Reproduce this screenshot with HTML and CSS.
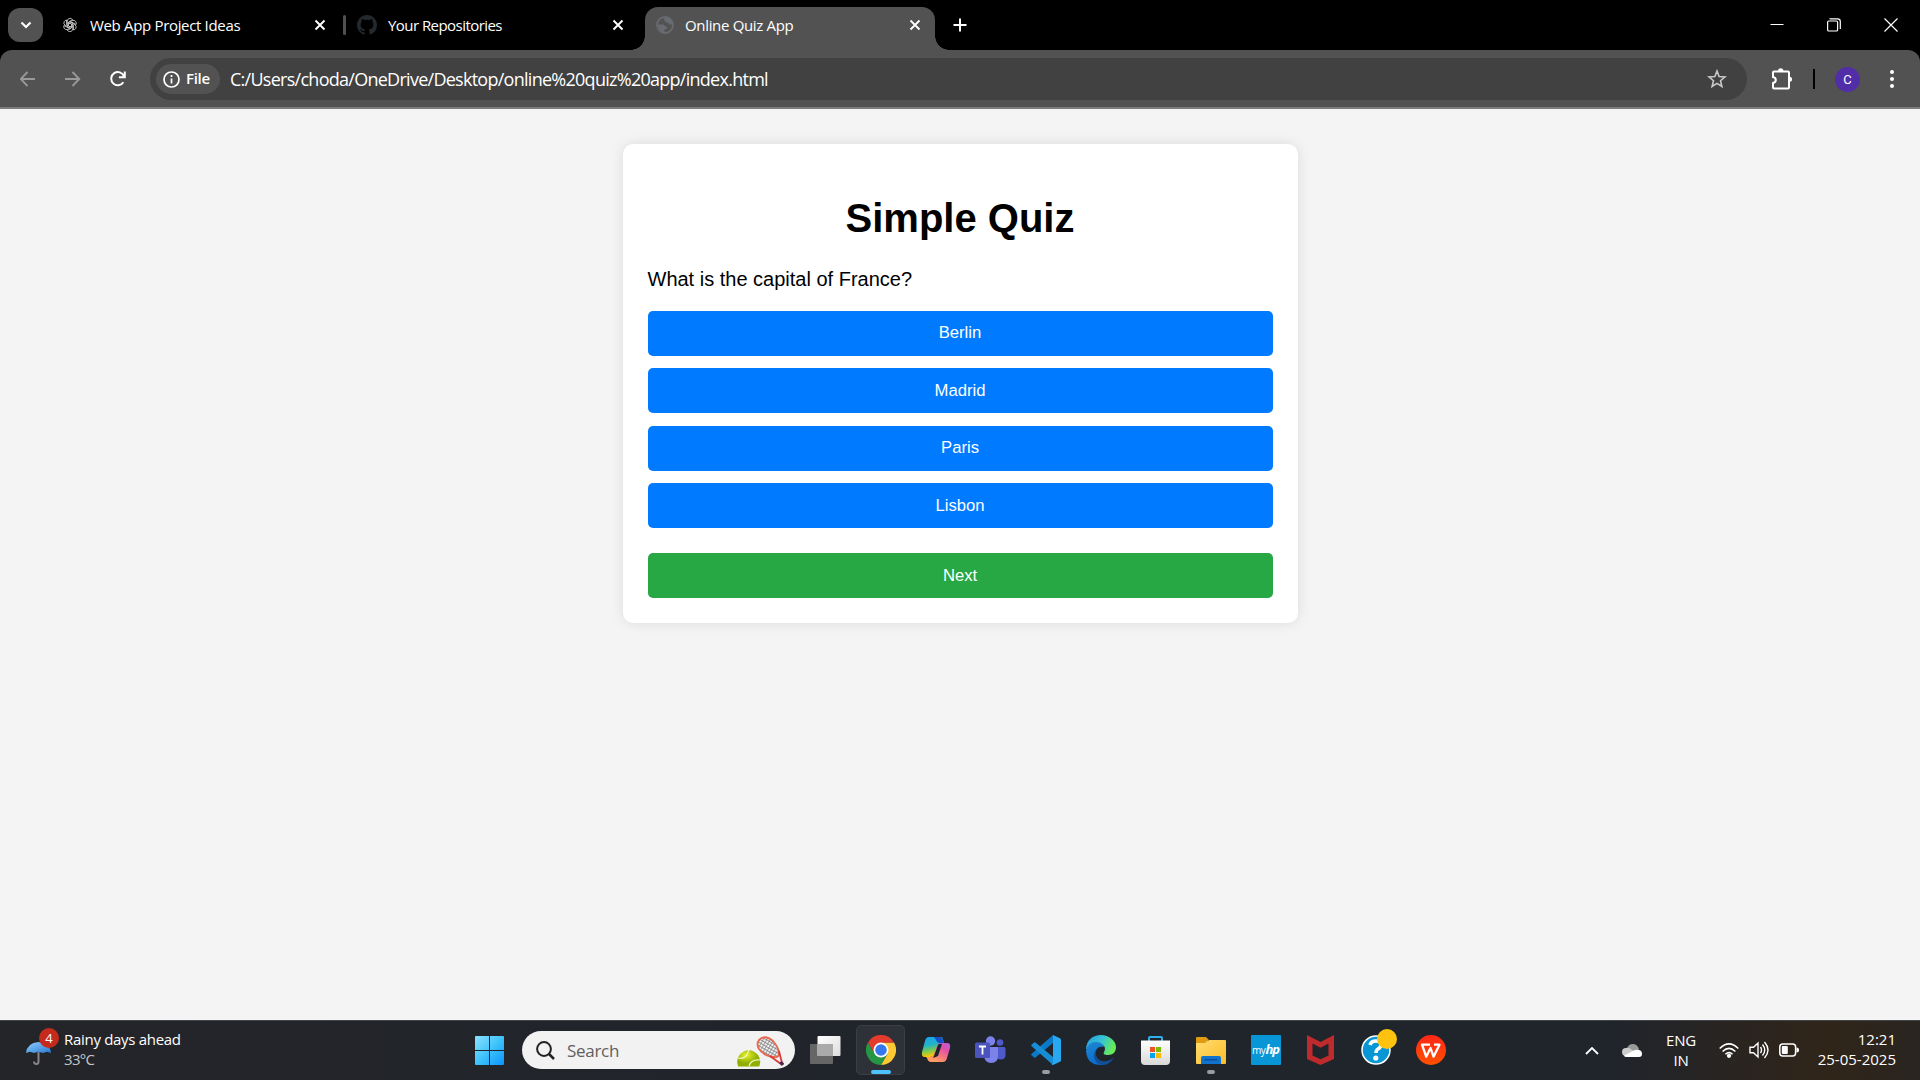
FILE: index.html
```html
<!DOCTYPE html>
<html lang="en">
<head>
<meta charset="utf-8">
<title>Online Quiz App</title>
<link rel="stylesheet" href="styles.css">
</head>
<body>
<header class="tabstrip">
  <div class="tab-search"><svg width="12" height="8" viewBox="0 0 12 8"><path d="M1.500 1.500 6 6l4.500-4.500" fill="none" stroke="#fff" stroke-width="2.200"/></svg></div>
  <div class="tab tab-one">
    <svg class="favicon" width="16" height="16" viewBox="0 0 16 16" fill="none" stroke="#d0d0d0" stroke-width=".8"><path id="petal" d="M5.300 9.500V4.100Q5.400 1.500 8 1.300q1.600 0 2.600 1.200L6.500 5v4"/><use href="#petal" transform="rotate(60 8 8)"/><use href="#petal" transform="rotate(120 8 8)"/><use href="#petal" transform="rotate(180 8 8)"/><use href="#petal" transform="rotate(240 8 8)"/><use href="#petal" transform="rotate(300 8 8)"/></svg>
    <span class="tab-title">Web App Project Ideas</span>
    <svg class="tab-close" width="12" height="12" viewBox="0 0 12 12"><path d="m1.500 1.500 9 9m0-9-9 9" stroke="#fff" stroke-width="1.900"/></svg>
  </div>
  <div class="tab-divider"></div>
  <div class="tab tab-two">
    <svg class="favicon" width="20" height="20" viewBox="0 0 16 16" fill="#24292e"><path d="M8 0C3.580 0 0 3.580 0 8c0 3.540 2.290 6.530 5.470 7.590.4.070.55-.17.55-.38 0-.19-.01-.82-.01-1.490-2.010.37-2.530-.49-2.690-.94-.09-.23-.48-.94-.82-1.130-.28-.15-.68-.52-.01-.53.63-.01 1.080.58 1.230.82.72 1.210 1.870.87 2.330.66.07-.52.28-.87.51-1.070-1.780-.2-3.640-.89-3.640-3.950 0-.87.31-1.590.82-2.150-.08-.2-.36-1.020.08-2.120 0 0 .67-.21 2.200.82.64-.18 1.320-.27 2-.27s1.360.09 2 .27c1.530-1.040 2.200-.82 2.200-.82.44 1.100.16 1.920.08 2.120.51.56.82 1.270.82 2.150 0 3.070-1.870 3.750-3.650 3.950.29.25.54.73.54 1.480 0 1.070-.01 1.930-.01 2.200 0 .21.15.46.55.38A8.010 8.010 0 0 0 16 8c0-4.420-3.580-8-8-8"/></svg>
    <span class="tab-title">Your Repositories</span>
    <svg class="tab-close" width="12" height="12" viewBox="0 0 12 12"><path d="m1.500 1.500 9 9m0-9-9 9" stroke="#fff" stroke-width="1.900"/></svg>
  </div>
  <div class="tab tab-active">
    <svg class="favicon" width="18" height="18" viewBox="0 0 18 18"><circle cx="9" cy="9" r="8" fill="none" stroke="#686b71" stroke-width="1.800"/><path d="M1.500 8.500h5.500c1.500 0 1.500 2 3 2s1.500 1.500.5 2.500H8.500v3.500l-4-1zM9 1.200l-1 2.300c0 2 2 1 2 2.500 0 1 2.500 0 2.500 1.500 0 1 3 1 4.500 1C17 4 13 1 9 1.200" fill="#686b71"/></svg>
    <span class="tab-title">Online Quiz App</span>
    <svg class="tab-close" width="12" height="12" viewBox="0 0 12 12"><path d="m1.500 1.500 9 9m0-9-9 9" stroke="#fff" stroke-width="1.900"/></svg>
  </div>
  <svg class="new-tab" width="14" height="14" viewBox="0 0 14 14"><path d="M7 .5v13M.5 7h13" stroke="#fff" stroke-width="2"/></svg>
  <div class="window-controls">
    <svg width="14" height="14" viewBox="0 0 14 14"><path d="M.5 6.500h13" stroke="#fff" stroke-width="1"/></svg>
    <svg width="14" height="14" viewBox="0 0 14 14" fill="none" stroke="#fff"><rect x=".6" y="3" width="10" height="10" rx="1.300" stroke-width="1.200"/><path d="M3 1.200V.8h7.500Q13.300.8 13.300 3.500V11" stroke-width="1.200"/></svg>
    <svg width="14" height="14" viewBox="0 0 14 14"><path d="m.5.5 13 13m0-13-13 13" stroke="#fff" stroke-width="1.200"/></svg>
  </div>
</header>
<nav class="toolbar-wrap">
  <div class="toolbar">
    <svg class="nav-icon" width="16" height="16" viewBox="0 0 16 16"><path d="M15 8H1M7.500 1 .7 8l6.800 7" fill="none" stroke="#999" stroke-width="1.800"/></svg>
    <svg class="nav-icon" width="16" height="16" viewBox="0 0 16 16"><path d="M0 8h14M7.500 1l6.800 7-6.800 7" fill="none" stroke="#999" stroke-width="1.800"/></svg>
    <svg class="nav-icon" width="16" height="16" viewBox="0 0 16 16"><path d="M13.400 11.200A6.600 6.600 0 1 1 14 5.300M14.800.4v5.900H8.900" fill="none" stroke="#fff" stroke-width="2"/></svg>
    <div class="omnibox">
      <div class="chip">
        <svg width="17" height="17" viewBox="0 0 17 17"><circle cx="8.500" cy="8.500" r="7.500" fill="none" stroke="#fff" stroke-width="1.700"/><path d="M8.500 7.400v5M8.500 4v1.900" stroke="#fff" stroke-width="1.700"/></svg>
        <span>File</span>
      </div>
      <span class="url">C:/Users/choda/OneDrive/Desktop/online%20quiz%20app/index.html</span>
      <svg class="star" width="20" height="20" viewBox="0 0 20 20"><path d="m10 2 2.100 5.500 5.900.4-4.500 3.800 1.400 5.800-4.900-3.100-4.900 3.100 1.400-5.800L2 7.900l5.900-.4z" fill="none" stroke="#c8c8c8" stroke-width="1.600"/></svg>
    </div>
    <svg class="extensions" width="22" height="22" viewBox="0 0 22 22"><path d="M2 4.500Q2 3.500 3 3.500h14q1 0 1 1v14.900q0 1-1 1H3q-1 0-1-1v-4.300q2.800-.4 2.800-3T2 9.100z" fill="none" stroke="#fff" stroke-width="2"/><path d="M7 3.500V3a2.700 2.700 0 0 1 5.400 0v.5zM18 8.800h.6a2.500 2.500 0 0 1 0 5H18z" fill="#fff"/></svg>
    <div class="toolbar-divider"></div>
    <div class="avatar">C</div>
    <svg class="menu" width="4" height="18" viewBox="0 0 4 18" fill="#fff"><circle cx="2" cy="2" r="2"/><circle cx="2" cy="9" r="2"/><circle cx="2" cy="16" r="2"/></svg>
  </div>
</nav>
<main class="page">
  <section class="quiz">
    <h1 class="quiz-title">Simple Quiz</h1>
    <p class="question">What is the capital of France?</p>
    <div class="answers">
      <button class="btn">Berlin</button>
      <button class="btn">Madrid</button>
      <button class="btn">Paris</button>
      <button class="btn">Lisbon</button>
    </div>
    <button class="btn btn-next">Next</button>
  </section>
</main>
<footer class="taskbar">
  <div class="weather">
    <div class="weather-icon">
      <svg width="26" height="25" viewBox="0 0 26 25"><defs><linearGradient id="umb" x2="1" y2="1"><stop stop-color="#8fd0ff"/><stop offset="1" stop-color="#2878d4"/></linearGradient></defs><path d="M12.500 12v9.500q0 2.500-2.200 2.500T8 21.500" fill="none" stroke="#8a8584" stroke-width="2"/><path d="M0 13Q1 3 12.500 2 24 3 25 13l-4-1.200L17 13l-4.500-1.200L8 13l-4-1.200z" fill="url(#umb)"/></svg>
      <span class="badge">4</span>
    </div>
    <div class="weather-text"><span>Rainy days ahead</span><span class="temp">33°C</span></div>
  </div>
  <div class="dock">
    <svg class="start" width="29" height="29" viewBox="0 0 29 29"><defs><linearGradient id="win" x2="29" y2="29" gradientUnits="userSpaceOnUse"><stop stop-color="#8ce2ff"/><stop offset=".5" stop-color="#3fc3fb"/><stop offset="1" stop-color="#0a93fb"/></linearGradient></defs><path d="M1 0h13v14H0V1q0-1 1-1M15 0h13q1 0 1 1v13H15zM0 15h14v14H1q-1 0-1-1zM15 15h14v13q0 1-1 1H15z" fill="url(#win)"/></svg>
    <div class="search">
      <svg width="19" height="19" viewBox="0 0 19 19"><circle cx="8" cy="8" r="6.900" fill="none" stroke="#222" stroke-width="2"/><path d="m13 13 5 5" stroke="#222" stroke-width="2.500"/></svg>
      <span class="search-label">Search</span>
      <svg class="tennis" width="47" height="31" viewBox="0 0 47 31"><defs><radialGradient id="ball" cx=".4" cy=".3"><stop stop-color="#e6f22c"/><stop offset="1" stop-color="#8fae00"/></radialGradient><pattern id="mesh" width="3" height="3" patternUnits="userSpaceOnUse" patternTransform="rotate(30)"><path d="M0 0h3M0 0v3" stroke="#777" stroke-width="1.300"/></pattern></defs><path d="M1.200 30.500a11.500 11.500 0 1 1 21 0z" fill="url(#ball)"/><path d="M1 22q9 2 11-9M12 30q2-7 11-6" fill="none" stroke="#f4f8c8" stroke-width="1.200"/><path d="M22 4q6-6 14 1 6 7 6 12 0 5-5 4-10-1-15-8-3-5 0-9z" fill="url(#mesh)" stroke="#e8674d" stroke-width="1.800"/><path d="m33 20 11 8M42 15l3 12" stroke="#d53b3b" stroke-width="1.800"/><path d="m43.500 26 2.500 3" stroke="#53284f" stroke-width="3.500"/></svg>
    </div>
    <div class="slot"><svg width="31" height="28" viewBox="0 0 31 28"><defs><linearGradient id="tv" x2="1" y2="1"><stop stop-color="#fff"/><stop offset="1" stop-color="#ddd"/></linearGradient></defs><rect y="8" width="23" height="20" rx="1" fill="#666"/><rect x="7.500" width="23" height="20" rx="1" fill="url(#tv)"/><path d="M7.500 8H23v12H7.500z" fill="#aaa"/></svg></div>
    <div class="slot slot-active"><svg width="30" height="30" viewBox="0 0 48 48"><path d="M24 12h20.800A24 24 0 0 1 24 48l10.400-18z" fill="#fcc934"/><path d="M13.600 30 3.200 12A24 24 0 0 0 24 48l10.400-18z" fill="#249644"/><path d="M24 12h20.800A24 24 0 0 0 3.200 12l10.400 18z" fill="#e33b2e"/><circle cx="24" cy="24" r="12" fill="#fff"/><circle cx="24" cy="24" r="9.300" fill="#3478ee"/></svg><i class="indicator indicator-on"></i></div>
    <div class="slot"><svg width="30" height="28" viewBox="0 0 30 28"><defs><linearGradient id="cpa" x2=".2" y2="1"><stop stop-color="#16a5f4"/><stop offset=".45" stop-color="#24b3c5"/><stop offset=".7" stop-color="#70c95a"/><stop offset="1" stop-color="#ffc800"/></linearGradient><linearGradient id="cpb" x1="1" x2=".5" y2="1"><stop stop-color="#9f63ff"/><stop offset=".5" stop-color="#e351a6"/><stop offset="1" stop-color="#ff9b60"/></linearGradient></defs><path d="M15 1h4q2 0 3 3l1 3h3q4 0 3 5l-3 10q-1 4-4 4H10q-3 0-4-4l-1-1h4q3 0 4-4l3-10q1-3 4-3z" fill="url(#cpb)"/><path d="M8 1h11q3 0 3 3l1 3h-3q-3 0-4 3l-3 8q-1 3-4 3H4q-4 0-3-5L4 5q1-4 4-4" fill="url(#cpa)"/><path d="M13 1h6q2 0 3 3l1 3h-5q-2 0-3-3z" fill="#174fc9"/><path d="m17 9-4 11-1 2q3-1 5-2l4-12q-3-1-4 1" fill="#20232b"/></svg></div>
    <div class="slot"><svg width="31" height="28" viewBox="0 0 31 28"><circle cx="15.500" cy="5" r="4.700" fill="#7b83eb"/><circle cx="25" cy="6.500" r="3.300" fill="#5059c9"/><path d="M22 11h7q1.500 0 1.500 1.500V19q0 4.500-5 4.500Q20 23 20 18z" fill="#5059c9"/><path d="M9 11h13q1 0 1 1v8q0 7-7 7-6 0-7-7z" fill="#7b83eb"/><rect y="6.500" width="15" height="15.500" rx="1.500" fill="#4b53bc"/><path d="M4 10.500h7M7.500 10.500v8" stroke="#fff" stroke-width="1.800"/></svg></div>
    <div class="slot"><svg width="30" height="30" viewBox="0 0 30 30"><path d="M22 0v8L4.500 22.500q-.8.600-1.500 0L.7 20.500q-1-.8 0-1.700z" fill="#0a79c8"/><path d="M22 30v-8L4.500 7.500Q3.800 7 3 7.500L.7 9.500q-1 .8 0 1.700z" fill="#168dd5"/><path d="M22 0l7 3.200q1 .5 1 1.500v20.600q0 1-1 1.500L22 30q-.8 0-1.500-.8L22 28z" fill="#2aa7f1"/></svg><i class="indicator"></i></div>
    <div class="slot"><svg width="30" height="30" viewBox="0 0 30 30"><defs><linearGradient id="eda" x2="1" y2=".35"><stop stop-color="#259ddd"/><stop offset=".55" stop-color="#35c1d5"/><stop offset="1" stop-color="#66eb58"/></linearGradient><linearGradient id="edb" x2=".4" y2="1"><stop stop-color="#2087cf"/><stop offset="1" stop-color="#086dd1"/></linearGradient></defs><path d="M0 15C0 5 7 0 15 0s15 6 15 12c0 5-3 8-8 8-4 0-5-1-4-3 3-5-1-8-6-9Q4 7 0 15" fill="url(#eda)"/><path d="M0 16Q2 7 10 7q6 0 8 5c-7-2-11 5-7 11 3 5 9 5 10 5Q17 30 15 30 1 30 0 16" fill="url(#edb)"/><path d="M13 12c-6 5-3 13 3 14 5 1 9-1 12-4-3 6-7 8-11 8C7 29 5 17 13 12" fill="#124f96"/></svg></div>
    <div class="slot"><svg width="29" height="29" viewBox="0 0 29 29"><defs><linearGradient id="bag" x2="0" y2="1"><stop stop-color="#fff"/><stop offset="1" stop-color="#d8d8d8"/></linearGradient></defs><path d="M8 6V2q0-1 1-1h11q1 0 1 1v4" fill="none" stroke="#2fb0ea" stroke-width="2"/><path d="M0 4.500h29V25q0 4-4 4H4q-4 0-4-4z" fill="url(#bag)"/><path d="M9 11h5v5H9z" fill="#f05125"/><path d="M15 11h5v5h-5z" fill="#7fb900"/><path d="M9 17h5v5H9z" fill="#00a3ee"/><path d="M15 17h5v5h-5z" fill="#ffb900"/></svg></div>
    <div class="slot"><svg width="30" height="27" viewBox="0 0 30 27"><defs><linearGradient id="fold" x2="1" y2="1"><stop stop-color="#ffdc70"/><stop offset="1" stop-color="#fcbc29"/></linearGradient></defs><path d="M1 0h9l3 3h-1v5H0V1q0-1 1-1" fill="#df9c12"/><path d="M0 6h9l4-3h16q1 0 1 1v22q0 1-1 1H1q-1 0-1-1z" fill="url(#fold)"/><path d="M5 27v-6q0-2 2-2h16q2 0 2 2v6z" fill="#1172cf"/><path d="M8.500 22.800h13" stroke="#073d82"/></svg><i class="indicator"></i></div>
    <div class="slot"><div class="myhp">my<b>hp</b></div></div>
    <div class="slot"><svg width="27" height="30" viewBox="0 0 27 30"><path d="m0 0 13.500 7L27 0v24l-13.500 6L0 24zm5.500 8.500v12l8 3.800 8-3.800v-12l-8 4.200z" fill="#bf2a2d"/></svg></div>
    <div class="slot"><div class="help"><svg width="30" height="30" viewBox="0 0 30 30"><circle cx="15" cy="15" r="14" fill="#0996d4" stroke="#fff" stroke-width="1.500"/><path d="M9 10q1-4 6-4t5 4q0 2-3 4-2 1-2 4" fill="none" stroke="#fff" stroke-width="3.500"/><circle cx="14.800" cy="23" r="2.600" fill="#fff"/></svg><i class="help-dot"></i></div></div>
    <div class="slot"><svg width="30" height="30" viewBox="0 0 30 30"><defs><linearGradient id="wps" x2="0" y2="1"><stop stop-color="#ff2617"/><stop offset="1" stop-color="#ff5100"/></linearGradient></defs><circle cx="15" cy="15" r="15" fill="url(#wps)"/><path d="M14 9.700H6l4.200 12L14.500 13l3 8.700L23.500 9.700H18" fill="none" stroke="#fff" stroke-width="2.300" stroke-linejoin="round"/></svg></div>
  </div>
  <div class="tray">
    <svg class="chev" width="14" height="9" viewBox="0 0 14 9"><path d="m1 8 6-6 6 6" fill="none" stroke="#fff" stroke-width="1.800"/></svg>
    <svg class="cloud" width="20" height="13" viewBox="0 0 20 13"><path d="M5 5q1-5 6-5 4 0 6 5l-3 4z" fill="#999"/><path d="M4 12q-4 0-4-4t4-4q3-1 6 2l8 4v2z" fill="#ccc"/><path d="M2 11.500 13 6q7-1 7 4 0 3-3 3H4q-1.500 0-2-1.500" fill="#fff"/></svg>
    <div class="lang"><span>ENG</span><span>IN</span></div>
    <svg class="wifi" width="20" height="15" viewBox="0 0 20 15" fill="none" stroke="#fff" stroke-width="1.500"><path d="M.7 5.500q9.300-9.200 18.600 0M3.600 8.500q6.400-6.200 12.800 0M6.400 11.300q3.600-3.400 7.200 0"/><circle cx="10" cy="12.800" r="1.400" fill="#fff"/></svg>
    <svg class="volume" width="20" height="18" viewBox="0 0 20 18" fill="none" stroke="#fff" stroke-width="1.400"><path d="M1 6.200h3.500L9 2v14l-4.500-4.200H1zM11.500 6q2 3 0 6M13.500 3.500q4.500 5.500 0 11M15.500 1q7 8 0 16"/></svg>
    <svg class="battery" width="20" height="14" viewBox="0 0 20 14"><rect x=".8" y="1" width="15.800" height="12" rx="3" fill="none" stroke="#fff" stroke-width="1.500"/><rect x="2.800" y="3" width="6" height="8" rx="1" fill="#fff"/><path d="M17.500 4.500Q20 4.500 20 7t-2.500 2.500z" fill="#fff"/></svg>
    <div class="clock"><span>12:21</span><span>25-05-2025</span></div>
  </div>
</footer>
</body>
</html>
```
FILE: styles.css
```css
* { box-sizing: border-box; }
body {
  margin: 0;
  width: 1920px;
  height: 1080px;
  display: flex;
  flex-direction: column;
  overflow: hidden;
  background: #000;
  font-family: "Open Sans", "Noto Sans", sans-serif;
  color: #fff;
}
svg { display: block; flex: none; }

/* Tab strip */
.tabstrip {
  height: 50px;
  display: flex;
  align-items: center;
  padding-left: 8px;
  background: #000;
}
.tab-search {
  width: 35px;
  height: 34px;
  border-radius: 12px;
  background: #525252;
  display: grid;
  place-items: center;
}
.tab { display: flex; align-items: center; height: 34px; font-size: 15px; }
.tab-title { flex: 1; white-space: nowrap; letter-spacing: -0.33px; }
.tab-one { margin-left: 19px; width: 264px; gap: 12px; }
.tab-divider { width: 3px; height: 20px; border-radius: 2px; background: #505050; margin-left: 17px; }
.tab-two { margin-left: 11px; width: 267px; gap: 11px; }
.tab-two .tab-title { letter-spacing: -0.55px; }
.tab-active {
  position: relative;
  align-self: flex-end;
  width: 290px;
  height: 43px;
  margin-left: 21px;
  padding: 0 14px 7px 11px;
  gap: 11px;
  background: #525252;
  border-radius: 13px 13px 0 0;
}
.tab-active::before,
.tab-active::after {
  content: "";
  position: absolute;
  bottom: 0;
  width: 14px;
  height: 14px;
}
.tab-active::before { right: 100%; background: radial-gradient(circle at 0 0, transparent 13.5px, #525252 14px); }
.tab-active::after { left: 100%; background: radial-gradient(circle at 100% 0, transparent 13.5px, #525252 14px); }
.new-tab { margin-left: 18px; }
.window-controls { display: flex; gap: 43px; margin-left: auto; padding-right: 22px; }

/* Toolbar */
.toolbar-wrap { height: 59px; background: #000; }
.toolbar {
  height: 59px;
  display: flex;
  align-items: center;
  padding: 1px 26px 0 20px;
  background: #525252;
  border-bottom: 2px solid #7d7a7b;
  border-radius: 12px 12px 0 0;
}
.nav-icon { margin-right: 29px; }
.omnibox {
  width: 1597px;
  height: 42px;
  margin-left: -5px;
  display: flex;
  align-items: center;
  padding: 0 20px 0 6px;
  border-radius: 21px;
  background: #414141;
}
.chip {
  width: 64px;
  height: 30px;
  display: flex;
  align-items: center;
  gap: 6px;
  padding-left: 7px;
  border-radius: 15px;
  background: #525252;
  font-size: 15px;
  font-weight: 600;
  line-height: 18px;
  letter-spacing: -0.3px;
}
.chip span { margin-top: -2px; }
.url { margin-left: 10px; font-size: 18px; letter-spacing: -0.73px; white-space: nowrap; }
.star { margin-left: auto; }
.extensions { margin-left: 24px; }
.toolbar-divider { width: 2px; height: 20px; background: #000; margin-left: 20px; }
.avatar {
  width: 25px;
  height: 25px;
  margin-left: 20px;
  border-radius: 50%;
  background: #512da8;
  display: grid;
  place-items: center;
  font: 13px Roboto, sans-serif;
}
.menu { margin-left: auto; }

/* Quiz page */
.page {
  flex: 1;
  padding-top: 35px;
  background: #f4f4f4;
  font-family: "Liberation Sans", Arial, sans-serif;
  color: #000;
}
.quiz {
  width: 675px;
  height: 479px;
  margin: 0 auto;
  padding: 25px;
  background: #fff;
  border-radius: 10px;
  box-shadow: 0 0 12.5px rgba(0, 0, 0, 0.1);
}
.quiz-title { margin: 27px 0; font-size: 40px; line-height: 45px; text-align: center; }
.question { margin: 0; font-size: 20px; line-height: 23px; }
.answers { display: grid; gap: 12.4px; margin: 20px 0 25px; }
.btn {
  display: block;
  width: 100%;
  height: 45px;
  padding: 0 0 0.2px;
  border: 0;
  border-radius: 5px;
  background: #007bff;
  color: #fff;
  font: 16.667px "Liberation Sans", Arial, sans-serif;
}
.btn-next { background: #28a745; }

/* Taskbar */
.taskbar {
  height: 60px;
  display: flex;
  align-items: center;
  padding-bottom: 1px;
  border-top: 1px solid #42464a;
  background: linear-gradient(90deg, #242529 0, #20242b 48%, #20242b 84%, #302519 95%, #2a2521 100%);
  font-size: 15px;
}
.weather { width: 475px; display: flex; padding-left: 26px; }
.weather-icon { position: relative; width: 38px; padding-top: 9px; }
.badge {
  position: absolute;
  left: 13px;
  top: -3px;
  width: 20px;
  height: 20px;
  border-radius: 50%;
  background: #c42b1c;
  font-size: 13px;
  line-height: 20px;
  text-align: center;
}
.weather-text { display: flex; flex-direction: column; margin-top: -2px; line-height: 20px; letter-spacing: -0.3px; }
.temp { color: #c8c8c8; letter-spacing: -0.7px; }
.dock { display: flex; align-items: center; }
.search {
  width: 273px;
  height: 38px;
  margin: 0 3px 0 18px;
  display: flex;
  align-items: center;
  padding: 0 11px 0 14px;
  border-radius: 19px;
  background: #f2f2f2;
}
.search-label { margin-left: 12px; font-size: 17px; letter-spacing: -0.3px; color: #606060; }
.tennis { margin-left: auto; margin-top: 3px; }
.slot { position: relative; width: 55px; height: 50px; display: grid; place-items: center; }
.slot-active::before {
  content: "";
  position: absolute;
  inset: 0 3px;
  border: 1px solid #3b3e44;
  border-radius: 5px;
  background: #2e3137;
}
.slot-active svg { position: relative; }
.indicator {
  position: absolute;
  left: 50%;
  bottom: 1px;
  width: 8px;
  height: 4px;
  margin-left: -4px;
  border-radius: 2px;
  background: #999b9e;
}
.indicator-on { width: 20px; margin-left: -10px; background: #4cc2ff; }
.myhp {
  width: 30px;
  height: 30px;
  border-radius: 1px;
  background: #0996d6;
  font-size: 10px;
  line-height: 29px;
  text-align: center;
  letter-spacing: -0.4px;
}
.myhp b { font-size: 13px; font-style: italic; letter-spacing: -1px; }
.help { position: relative; }
.help-dot {
  position: absolute;
  right: -6px;
  top: -6px;
  width: 20px;
  height: 20px;
  border-radius: 50%;
  background: #ffc20e;
}
.tray { flex: 1; display: flex; align-items: center; padding-right: 24px; }
.chev { margin-left: auto; }
.cloud { margin-left: 23px; }
.lang { width: 34px; margin: -1px 0 0 22px; display: flex; flex-direction: column; align-items: center; line-height: 20px; letter-spacing: -0.2px; }
.wifi { margin-left: 21px; }
.volume { margin-left: 10px; }
.battery { margin-left: 10px; }
.clock { width: 97px; display: flex; flex-direction: column; align-items: flex-end; margin-top: -3px; line-height: 20px; white-space: nowrap; }
```
